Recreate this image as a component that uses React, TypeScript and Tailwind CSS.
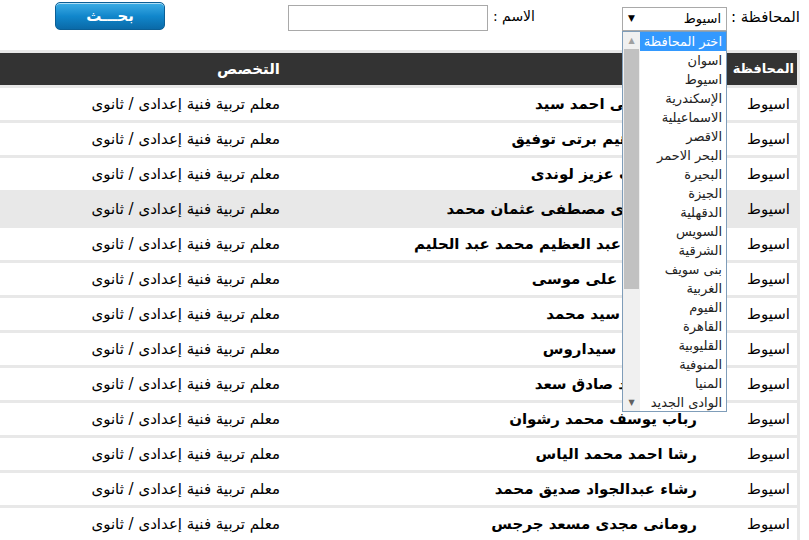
import React from "react";

const provinces = [
  "اختر المحافظة",
  "اسوان",
  "اسيوط",
  "الإسكندرية",
  "الاسماعيلية",
  "الاقصر",
  "البحر الاحمر",
  "البحيرة",
  "الجيزة",
  "الدقهلية",
  "السويس",
  "الشرقية",
  "بنى سويف",
  "الغربية",
  "الفيوم",
  "القاهرة",
  "القليوبية",
  "المنوفية",
  "المنيا",
  "الوادى الجديد",
];

const names = [
  "هناء الزناتى احمد سيد",
  "مريم ابراهيم برتى توفيق",
  "ماجد نجيب عزيز لوندى",
  "محمد مجدى مصطفى عثمان محمد",
  "عبير ناديه عبد العظيم محمد عبد الحليم",
  "منى محمد على موسى",
  "امل محمد سيد محمد",
  "مريم اديب سيداروس",
  "احمد محمد صادق سعد",
  "رباب يوسف محمد رشوان",
  "رشا احمد محمد الياس",
  "رشاء عبدالجواد صديق محمد",
  "رومانى مجدى مسعد جرجس",
];

const spec = "معلم تربية فنية إعدادى / ثانوى";

export default function App() {
  return (
    <div
      className="relative w-[809px] h-[540px] overflow-hidden bg-white flex text-black"
      style={{ fontFamily: '"DejaVu Sans", "Liberation Sans", sans-serif' }}
    >
      <div dir="rtl" className="w-[800px] shrink-0">
        {/* Search form */}
        <div className="h-[50px] flex items-start">
          <div className="w-[73px] pt-[7px] text-[15px] leading-[20px]">المحافظة :</div>
          <div className="w-[105px] mt-[7px] h-[24px] border border-[#a9a9a9] flex items-center justify-between px-[5px] text-[13px]">
            <span>اسيوط</span>
            <span className="text-[9px]">▼</span>
          </div>
          <div className="w-[87px]" />
          <div className="w-[47px] pt-[6px] text-[14px] leading-[20px]">الاسم :</div>
          <div className="w-[200px] mt-[5px] h-[26px] border border-[#a9a9a9]" />
          <div className="w-[123px]" />
          <button className="w-[110px] mt-[2px] h-[28px] rounded-[5px] border border-[#0b5f96] bg-gradient-to-b from-[#3aaee6] via-[#1187cc] to-[#0a6aa8] text-white font-bold text-[15px] tracking-[3px] shadow-[inset_0_1px_0_rgba(255,255,255,0.6)]">
            بحـــث
          </button>
        </div>

        {/* Results table */}
        <div className="bg-[#e8e8e8] pt-[3px] pr-[3px] flex flex-col gap-[3px]">
          <div className="h-[32px] bg-[#333333] text-white font-bold text-[15px] flex items-center">
            <div className="w-[100px] pr-[3px] text-[13px] whitespace-nowrap">المحافظة</div>
            <div className="w-[417px]">الاسم</div>
            <div className="flex-1">التخصص</div>
          </div>
          {names.map((n, i) => (
            <div
              key={i}
              className={`h-[32px] flex items-center text-[15px] ${i === 3 ? "bg-[#e8e8e8]" : "bg-white"}`}
            >
              <div className="w-[100px] pr-[7px]">اسيوط</div>
              <div className="w-[417px] font-bold whitespace-nowrap">{n}</div>
              <div className="flex-1 whitespace-nowrap">{spec}</div>
            </div>
          ))}
        </div>
      </div>

      {/* Open select list */}
      <div
        dir="rtl"
        className="absolute left-[622px] top-[31px] w-[105px] h-[381px] border border-[#7f9db9] bg-white flex"
      >
        <div className="flex-1 flex flex-col text-[13px]">
          {provinces.map((p, i) => (
            <div
              key={p}
              className={`h-[19px] leading-[19px] pr-[4px] whitespace-nowrap ${i === 0 ? "bg-[#3399ff] text-white" : "text-[#222]"}`}
            >
              {p}
            </div>
          ))}
        </div>
        <div className="w-[17px] bg-[#f0f0f0] flex flex-col items-center">
          <div className="h-[17px] flex items-center justify-center text-[8px] text-[#a0a0a0]">▲</div>
          <div className="w-[15px] h-[240px] bg-[#c1c1c1]" />
          <div className="flex-1" />
          <div className="h-[17px] flex items-center justify-center text-[8px] text-[#606060]">▼</div>
        </div>
      </div>
    </div>
  );
}
